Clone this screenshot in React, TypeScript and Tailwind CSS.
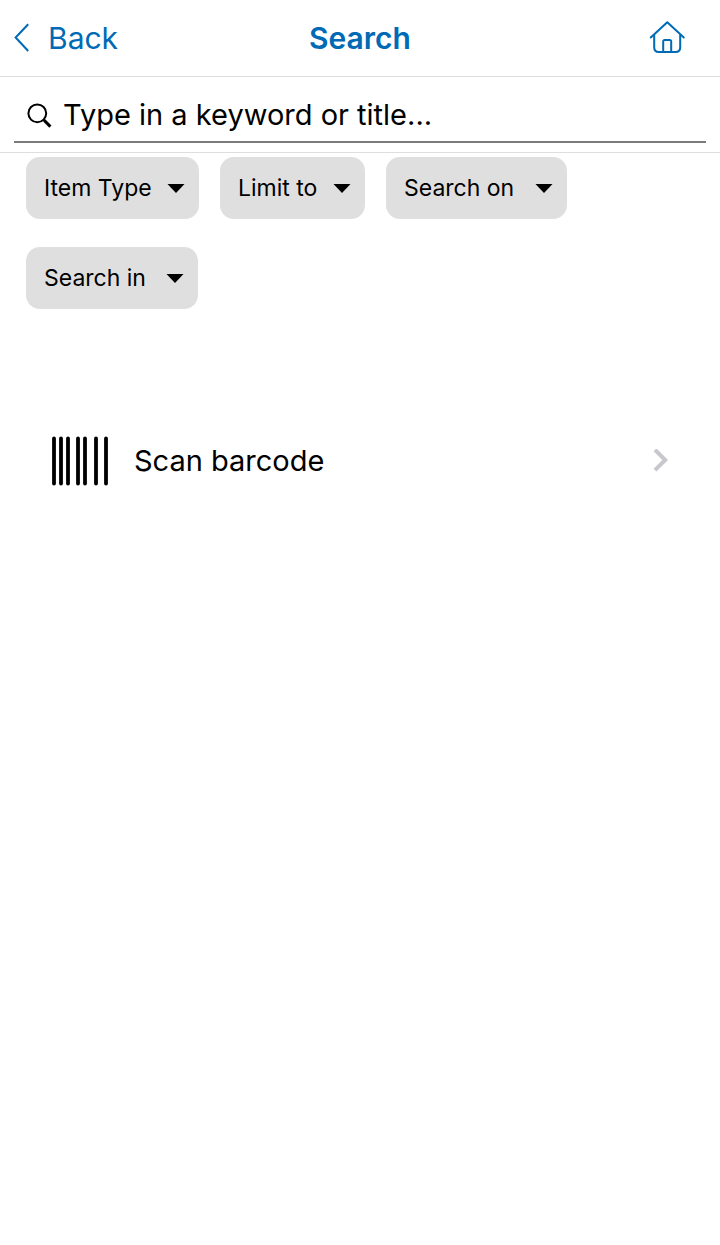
import { clsx } from "clsx"

const FILTERS = [
    { id: "item-type", label: "Item Type", wide: false },
    { id: "limit-to", label: "Limit to", wide: false },
    { id: "search-on", label: "Search on", wide: true },
    { id: "search-in", label: "Search in", wide: true }
]

// x offset of each bar in the barcode icon
const BARS = [2, 9, 16, 26, 33, 44, 54]

function Header() {
    return (
        <header className="grid grid-cols-[1fr_auto_1fr] items-center h-[77px] border-b border-[#dedede] px-3.5 text-[#006ab5]">
            <button type="button" className="flex items-center gap-[18px] justify-self-start text-[30px] leading-9">
                <svg width="16" height="30" viewBox="0 0 16 30" fill="none" stroke="currentColor" strokeWidth="2" aria-hidden="true">
                    <path d="M14.2 1.2 1.6 14.5 14.2 28" />
                </svg>
                Back
            </button>
            <h1 className="text-[30px] leading-9 font-semibold">Search</h1>
            <a href="#home" aria-label="Home" className="justify-self-end mr-[21px]">
                <svg width="36" height="34" viewBox="0 0 36 34" fill="none" stroke="currentColor" strokeWidth="2" strokeLinejoin="round" aria-hidden="true">
                    <path d="M1.2 17 18.3 1.2 35.4 17" />
                    <path d="M5.2 13.5v12.7c0 3.1 1.6 4.8 4.6 4.8h16.8c3 0 4.6-1.7 4.6-4.8V13.5" />
                    <path d="M14.2 31V20.6c0-1 .5-1.5 1.5-1.5h5c1 0 1.5.5 1.5 1.5V31" />
                </svg>
            </a>
        </header>
    )
}

function SearchBar() {
    return (
        <div className="border-b border-[#dedede] px-3.5 pt-3 pb-[9px]">
            <label className="flex items-center gap-[11px] h-[54px] pl-3 border-b-2 border-[#7b7b7b]">
                <svg width="26" height="26" viewBox="0 0 26 26" fill="none" stroke="currentColor" aria-hidden="true">
                    <circle cx="11.3" cy="11.3" r="8.9" strokeWidth="2" />
                    <path d="m17.4 17.4 1.4 1.5" strokeWidth="2" />
                    <path d="m18.2 18.4 6.2 6.2" strokeWidth="3" />
                </svg>
                <input
                    type="search"
                    aria-label="Search"
                    placeholder="Type in a keyword or title..."
                    className="flex-1 min-w-0 text-[29px] leading-9 outline-none placeholder:text-black"
                />
            </label>
        </div>
    )
}

function Filter({ id, label, wide }: { id: string; label: string; wide: boolean }) {
    return (
        <div className="relative">
            <select
                id={id}
                aria-label={label}
                className={clsx(
                    "block appearance-none h-[62px] rounded-[14px] bg-[#dfdfdf] pl-[18px] text-[23px]",
                    wide ? "pr-[52px]" : "pr-[47px]"
                )}
            >
                <option>{label}</option>
            </select>
            <svg className="absolute right-3.5 top-[27px] pointer-events-none" width="18" height="9" viewBox="0 0 18 9" aria-hidden="true">
                <path d="M.5 0h17L9 9z" />
            </svg>
        </div>
    )
}

export default function App() {
    return (
        <div className="min-h-screen bg-white text-black font-[Inter,sans-serif]">
            <Header />
            <main>
                <SearchBar />
                <div className="flex flex-wrap gap-x-[21px] gap-y-7 px-[26px] pt-1">
                    {FILTERS.map((filter) => (
                        <Filter key={filter.id} {...filter} />
                    ))}
                </div>
                <a href="#scan" className="flex items-center mt-[117px] pl-[50px] pr-[51px] py-[10px] text-[29px] leading-9">
                    <svg width="60" height="50" viewBox="0 0 60 50" stroke="currentColor" strokeWidth="3.8" strokeLinecap="round" aria-hidden="true">
                        {BARS.map((x) => (
                            <path key={x} d={`M${x + 2} 2.5v45`} />
                        ))}
                    </svg>
                    <span className="flex-1 ml-6">Scan barcode</span>
                    <svg width="16" height="24" viewBox="0 0 16 24" fill="none" stroke="#c7c7cc" strokeWidth="4" aria-hidden="true">
                        <path d="m2 .8 10.2 10.2L2 21.2" />
                    </svg>
                </a>
            </main>
        </div>
    )
}
